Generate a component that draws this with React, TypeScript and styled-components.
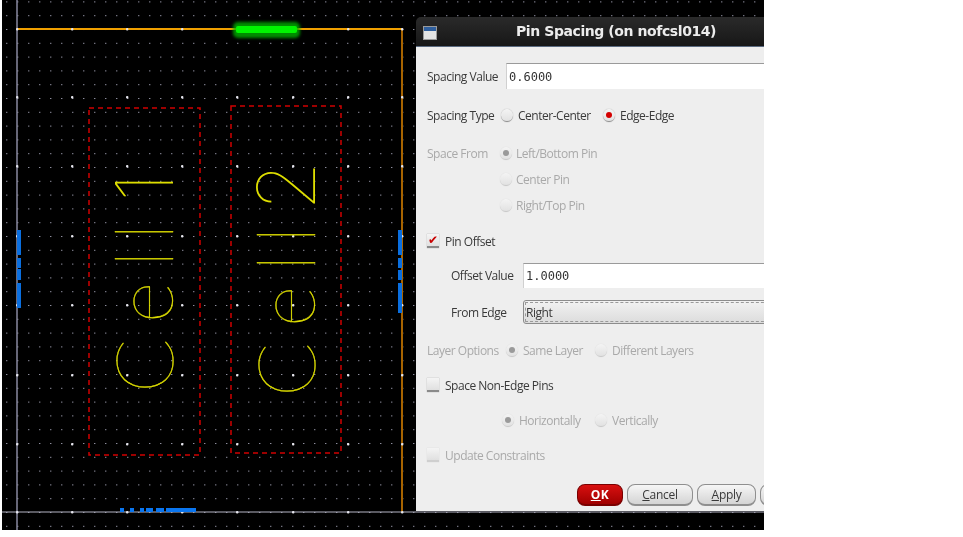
import React from "react";
import styled, { createGlobalStyle } from "styled-components";

const GlobalStyle = createGlobalStyle`
  html, body { margin: 0; padding: 0; background: #fff; }
  body { width: 963px; height: 537px; overflow: hidden; font-family: "Open Sans", "Noto Sans", sans-serif; }
`;

const majorX = [17, 72, 127, 182, 237, 293, 348, 402];
const majorY = [29, 97, 166, 236, 305, 375, 444, 512];
const leftPins = [[230, 25], [258, 10], [269, 11], [283, 25]];
const rightPins = [[230, 25], [258, 10], [270, 10], [283, 30]];
const bottomPins = [[120, 4], [130, 4], [140, 4], [146, 7], [156, 8], [166, 30]];

const CellLabel = ({ x, y, word, digit, glyphs, digitX }: { x: number; y: number; word: string; digit: string; glyphs: string; digitX: number }) => (
  <CellText transform={`translate(${x} ${y}) rotate(-90)`} x={glyphs} y="0">
    {word}
    <CellDigit x={digitX} y="0">{digit}</CellDigit>
  </CellText>
);

const LayoutCanvas = () => (
  <Canvas viewBox="2 0 762 530" width={762} height={530}>
    <defs>
      <pattern id="minor" x="6" y="1.4" width="11" height="13.8" patternUnits="userSpaceOnUse">
        <rect width="1.4" height="1" fill="#8d8d9e" />
      </pattern>
      <filter id="glow" x="-20%" y="-80%" width="140%" height="260%">
        <feGaussianBlur stdDeviation="1.6" />
      </filter>
    </defs>
    <rect x="2" y="0" width="762" height="530" fill="url(#minor)" />
    <line x1="17" y1="0" x2="17" y2="530" stroke="#8a8aa0" strokeWidth="1.5" />
    <line x1="2" y1="512" x2="764" y2="512" stroke="#b4b4c4" strokeWidth="1.2" />
    <line x1="402" y1="29" x2="402" y2="512" stroke="#a86400" strokeWidth="2" />
    <line x1="17" y1="29" x2="402" y2="29" stroke="#f0a000" strokeWidth="2" />
    {majorX.map((x) =>
      majorY.map((y) => <rect key={`${x}-${y}`} x={x - 1} y={y - 1} width="2.4" height="2.4" rx="1" fill="#e6e6ee" />),
    )}
    <rect x="233" y="22" width="67" height="16" rx="5" fill="#00b000" opacity="0.8" filter="url(#glow)" />
    <rect x="236" y="26" width="61" height="7" rx="2" fill="#00f500" />
    {leftPins.map(([y, h]) => <rect key={y} x="17" y={y} width="4" height={h} fill="#0a6fe0" />)}
    {rightPins.map(([y, h]) => <rect key={y} x="398" y={y} width="4" height={h} fill="#0a6fe0" />)}
    {bottomPins.map(([x, w]) => <rect key={x} x={x} y="508" width={w} height="4" fill="#0a76f0" />)}
    <CellBox x="89" y="108" width="111" height="347" />
    <CellBox x="231" y="106" width="110" height="347" />
    <CellLabel x={173} y={393} word="Cell" digit="1" glyphs="0 70 126 153" digitX={191} />
    <CellLabel x={315} y={397} word="Cell" digit="2" glyphs="0 70 126 154" digitX={186} />
  </Canvas>
);

const Radio = ({ on, off }: { on?: boolean; off?: boolean }) => (
  <RadioDot $off={off}>{on && <RadioMark $off={off} />}</RadioDot>
);

export default function App() {
  return (
    <>
      <GlobalStyle />
      <Shot>
        <LayoutCanvas />
        <Dialog>
          <TitleBar>
            <WindowIcon />
            <Title>Pin Spacing (on nofcsl014)</Title>
          </TitleBar>
          <Body>
            <Row $h={26} $top={16}>
              <Label $w={79}>Spacing Value</Label>
              <Input>0.6000</Input>
            </Row>
            <Row $h={22} $top={15}>
              <Label $w={74}>Spacing Type</Label>
              <Radio />
              <Label $w={85} $left={5}>Center-Center</Label>
              <Radio on />
              <Label $left={5}>Edge-Edge</Label>
            </Row>
            <Row $h={22} $top={16}>
              <Label $w={73} $off>Space From</Label>
              <Radio on off />
              <Label $left={4} $off>Left/Bottom Pin</Label>
            </Row>
            <Row $h={22} $top={4} $left={73}>
              <Radio off />
              <Label $left={4} $off>Center Pin</Label>
            </Row>
            <Row $h={22} $top={4} $left={73}>
              <Radio off />
              <Label $left={4} $off>Right/Top Pin</Label>
            </Row>
            <Row $h={22} $top={14}>
              <Check $checked>✔</Check>
              <Label $left={6}>Pin Offset</Label>
            </Row>
            <Row $h={25} $top={11} $left={24}>
              <Label $w={72}>Offset Value</Label>
              <Input>1.0000</Input>
            </Row>
            <Row $h={24} $top={12} $left={24}>
              <Label $w={72}>From Edge</Label>
              <Combo><ComboText>Right</ComboText></Combo>
            </Row>
            <Row $h={22} $top={15}>
              <Label $w={79} $off>Layer Options</Label>
              <Radio on off />
              <Label $w={72} $left={5} $off>Same Layer</Label>
              <Radio off />
              <Label $left={5} $off>Different Layers</Label>
            </Row>
            <Row $h={22} $top={13}>
              <Check />
              <Label $left={6}>Space Non-Edge Pins</Label>
            </Row>
            <Row $h={22} $top={13} $left={75}>
              <Radio on off />
              <Label $w={76} $left={5} $off>Horizontally</Label>
              <Radio off />
              <Label $left={5} $off>Vertically</Label>
            </Row>
            <Row $h={22} $top={13}>
              <Check $off />
              <Label $left={6} $off>Update Constraints</Label>
            </Row>
            <ButtonRow>
              <OkButton><u>O</u>K</OkButton>
              <Button $w={66}><u>C</u>ancel</Button>
              <Button $w={59}><u>A</u>pply</Button>
              <Button $w={40} />
            </ButtonRow>
          </Body>
        </Dialog>
      </Shot>
    </>
  );
}

const Shot = styled.div`
  position: relative;
  width: 762px;
  height: 530px;
  margin-left: 2px;
  background: #000;
  overflow: hidden;
`;
const Canvas = styled.svg`
  display: block;
  border-top: 1px solid #8f8f8f;
  margin-top: -1px;
`;
const CellBox = styled.rect`
  fill: none;
  stroke: #d00000;
  stroke-width: 1.5;
  stroke-dasharray: 5 4;
`;
const CellText = styled.text`
  font-family: "Lato", sans-serif;
  font-weight: 100;
  font-size: 80px;
  fill: #dede00;
  stroke: #dede00;
  stroke-width: 0.4;
`;
const CellDigit = styled.tspan`
  font-family: "Inter", sans-serif;
  font-weight: 100;
  stroke-width: 0;
`;
const Dialog = styled.div`
  position: absolute;
  left: 414px;
  top: 17px;
  width: 370px;
  height: 494px;
  display: flex;
  flex-direction: column;
  filter: blur(0.35px);
`;
const TitleBar = styled.div`
  height: 30px;
  flex: none;
  display: flex;
  align-items: center;
  padding: 0 0 2px 7px;
  background: linear-gradient(#2a2a2a, #171717);
  border-radius: 5px 0 0 0;
  border-bottom: 1px solid #5a6a80;
  box-sizing: border-box;
`;
const WindowIcon = styled.div`
  width: 14px;
  height: 14px;
  flex: none;
  margin-top: 4px;
  background: linear-gradient(#2f5f9e 0 4px, #e4e4e4 4px);
  border: 1px solid #9a9a9a;
  box-sizing: border-box;
`;
const Title = styled.div`
  margin-left: 79px;
  font-family: "DejaVu Sans", sans-serif;
  font-weight: 700;
  font-size: 14px;
  letter-spacing: -0.42px;
  color: #ececec;
  white-space: nowrap;
`;
const Body = styled.div`
  flex: 1;
  padding-left: 11px;
  background: #eeeeee;
  display: flex;
  flex-direction: column;
  font-size: 12px;
`;
const Row = styled.div<{ $h: number; $top: number; $left?: number }>`
  height: ${(p) => p.$h}px;
  margin-top: ${(p) => p.$top}px;
  margin-left: ${(p) => p.$left ?? 0}px;
  display: flex;
  align-items: center;
  flex: none;
`;
const Label = styled.span<{ $w?: number; $left?: number; $off?: boolean }>`
  flex: none;
  width: ${(p) => (p.$w ? `${p.$w}px` : "auto")};
  margin-left: ${(p) => p.$left ?? 0}px;
  color: ${(p) => (p.$off ? "#a9a9a9" : "#3a3a3a")};
  letter-spacing: -0.48px;
  white-space: nowrap;
`;
const Input = styled.div`
  flex: 1;
  align-self: stretch;
  display: flex;
  align-items: center;
  padding-left: 2px;
  background: #fff;
  border-top: 1px solid #9a9a9a;
  border-left: 1px solid #d0d0d0;
  font-family: "DejaVu Sans Mono", monospace;
  font-size: 12px;
  color: #333;
`;
const Combo = styled.div`
  flex: 1;
  align-self: stretch;
  display: flex;
  align-items: center;
  padding-left: 2px;
  background: linear-gradient(#f2f2f2, #dcdcdc);
  border: 1px solid #8c8c8c;
  border-radius: 3px 0 0 3px;
  outline: 1px dashed #9a9a9a;
  outline-offset: -3px;
`;
const ComboText = styled.span`
  color: #3a3a3a;
  letter-spacing: -0.48px;
`;
const RadioDot = styled.span<{ $off?: boolean }>`
  flex: none;
  width: 12px;
  height: 12px;
  border-radius: 50%;
  display: flex;
  align-items: center;
  justify-content: center;
  background: linear-gradient(#f4f4f4, #e2e2e2);
  border-bottom: 1px solid ${(p) => (p.$off ? "#c8c8c8" : "#8e8e8e")};
  box-shadow: 0 0 1px ${(p) => (p.$off ? "#cfcfcf" : "#888")};
`;
const RadioMark = styled.span<{ $off?: boolean }>`
  width: 6px;
  height: 6px;
  border-radius: 50%;
  background: ${(p) => (p.$off ? "#9a9a9a" : "#d40000")};
`;
const Check = styled.span<{ $checked?: boolean; $off?: boolean }>`
  flex: none;
  width: 12px;
  height: 12px;
  display: flex;
  align-items: center;
  justify-content: center;
  font-family: "DejaVu Sans", sans-serif;
  font-size: 12px;
  line-height: 1;
  color: #c80000;
  background: linear-gradient(#f4f4f4, #e0e0e0);
  border-bottom: 2px solid ${(p) => (p.$off ? "#cfcfcf" : "#8a8a8a")};
  box-shadow: 0 0 1px ${(p) => (p.$off ? "#cfcfcf" : "#999")};
`;
const ButtonRow = styled.div`
  display: flex;
  gap: 4px;
  margin-top: 18px;
  margin-left: 150px;
  height: 22px;
  flex: none;
`;
const Button = styled.div<{ $w: number }>`
  flex: none;
  width: ${(p) => p.$w}px;
  box-sizing: border-box;
  border-radius: 8px;
  border: 1px solid #8f8f8f;
  border-bottom-width: 2px;
  background: linear-gradient(#f6f6f6, #d4d4d4);
  color: #3a3a3a;
  display: flex;
  align-items: center;
  justify-content: center;
  letter-spacing: -0.3px;
  u { text-decoration: underline; }
`;
const OkButton = styled(Button).attrs({ $w: 46 })`
  background: linear-gradient(#d81010, #a00000);
  border-color: #7a0000;
  color: #fff;
  font-weight: 700;
  letter-spacing: 0.5px;
`;
